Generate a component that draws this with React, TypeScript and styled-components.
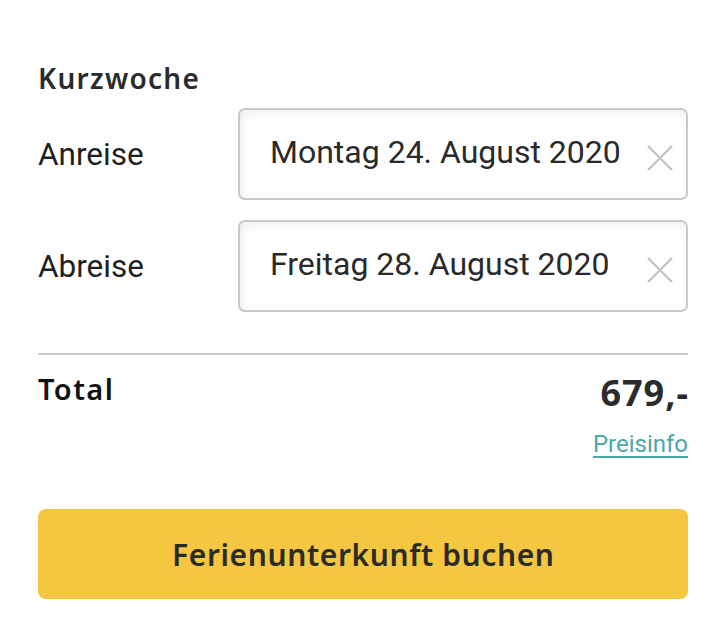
import styled, { createGlobalStyle } from "styled-components";

const GlobalStyle = createGlobalStyle`
  body {
    margin: 0;
    background: #fff;
    font-family: Roboto, "Liberation Sans", sans-serif;
    color: #222;
  }
`;

const Card = styled.section`
  width: 650px;
  padding: 60px 38px 0;
`;

const Heading = styled.h2`
  margin: 0 0 12px;
  font-family: "Noto Sans", Lato, sans-serif;
  font-weight: 600;
  font-size: 28px;
  line-height: 36px;
  letter-spacing: 1.3px;
  color: #2b2b2b;
`;

const DateList = styled.div`
  display: flex;
  flex-direction: column;
  gap: 20px;
`;

const DateRow = styled.div`
  display: grid;
  grid-template-columns: 200px 450px;
  align-items: center;
`;

const Label = styled.label`
  font-size: 31.5px;
  color: #1f1f1f;
`;

const DateField = styled.div`
  display: flex;
  align-items: center;
  justify-content: space-between;
  box-sizing: border-box;
  height: 92px;
  padding: 0 12px 0 30px;
  border: 2px solid #c9c9c9;
  border-radius: 7px;
  box-shadow: inset 3px 4px 8px rgba(0, 0, 0, 0.06);
  font-size: 32px;
  color: #2a2a2a;
`;

const DateText = styled.span`
  margin-top: -4px;
`;

const ClearIcon = styled.svg`
  width: 28px;
  height: 28px;
  margin-top: 8px;
`;

const Divider = styled.hr`
  margin: 41px 0 0;
  border: none;
  border-top: 2px solid #c8c8c8;
`;

const TotalRow = styled.div`
  display: flex;
  justify-content: space-between;
  align-items: flex-start;
  padding-top: 14px;
`;

const TotalLabel = styled.div`
  font-family: "Noto Sans", Lato, sans-serif;
  font-weight: 600;
  font-size: 29px;
  line-height: 40px;
  letter-spacing: 1.4px;
  color: #111;
`;

const PriceColumn = styled.div`
  display: flex;
  flex-direction: column;
  align-items: flex-end;
`;

const Price = styled.div`
  margin-right: -1px;
  font-family: "Noto Sans", Lato, sans-serif;
  font-weight: 700;
  font-size: 36px;
  line-height: 48px;
  letter-spacing: 1px;
  color: #2b2b2b;
`;

const InfoLink = styled.a`
  margin-top: 12px;
  font-size: 24px;
  line-height: 30px;
  color: #4aa8a8;
  text-decoration: underline;
  text-underline-offset: 4px;
`;

const BookButton = styled.button`
  display: block;
  width: 100%;
  height: 90px;
  margin-top: 50px;
  padding: 0 0 0 0.6px;
  border: none;
  border-radius: 8px;
  background: #f5c63f;
  font-family: "Noto Sans", Lato, sans-serif;
  font-weight: 600;
  font-size: 30px;
  letter-spacing: 0.6px;
  color: #2b2b2b;
  cursor: pointer;
`;

const Clear = () => (
  <ClearIcon viewBox="0 0 28 28" fill="none">
    <path d="M2 2 L26 26 M26 2 L2 26" stroke="#c4c4c4" strokeWidth="2.4" />
  </ClearIcon>
);

const dates = [
  { label: "Anreise", value: "Montag 24. August 2020" },
  { label: "Abreise", value: "Freitag 28. August 2020" },
];

const App = () => (
  <>
    <GlobalStyle />
    <Card>
      <Heading>Kurzwoche</Heading>
      <DateList>
        {dates.map((d) => (
          <DateRow key={d.label}>
            <Label>{d.label}</Label>
            <DateField>
              <DateText>{d.value}</DateText>
              <Clear />
            </DateField>
          </DateRow>
        ))}
      </DateList>
      <Divider />
      <TotalRow>
        <TotalLabel>Total</TotalLabel>
        <PriceColumn>
          <Price>679,-</Price>
          <InfoLink href="#">Preisinfo</InfoLink>
        </PriceColumn>
      </TotalRow>
      <BookButton>Ferienunterkunft buchen</BookButton>
    </Card>
  </>
);

export default App;
